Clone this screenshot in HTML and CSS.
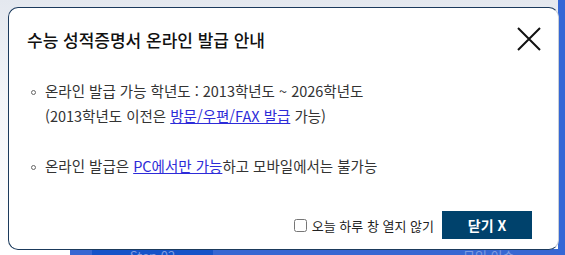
FILE: index.html
```html
<!DOCTYPE html>
<html lang="ko">
<head>
<meta charset="utf-8">
<link rel="stylesheet" href="styles.css">
</head>
<body>
<div class="scene">
  <div class="scene-main">
    <div class="scene-top"></div>
    <div class="scene-bars">
      <div class="bar bar-light w22"></div>
      <div class="bar bar-dark w121">Step 02</div>
      <div class="bar bar-light grow">무인 이수</div>
    </div>
  </div>
  <div class="scene-side"></div>
</div>

<div class="modal">
  <div class="modal-head">
    <h2 class="modal-title">수능 성적증명서 온라인 발급 안내</h2>
    <button class="close-btn" aria-label="닫기">
      <svg width="24" height="24" viewBox="0 0 24 24"><path d="M1 1L23 23M23 1L1 23" stroke="#111" stroke-width="2" fill="none"/></svg>
    </button>
  </div>
  <ul class="modal-list">
    <li><span class="dot"></span><span>온라인 발급 가능 학년도 : 2013학년도 ~ 2026학년도<br>(2013학년도 이전은 <a href="#">방문/우편/FAX 발급</a> 가능)</span></li>
    <li><span class="dot"></span><span>온라인 발급은 <a href="#">PC에서만 가능</a>하고 모바일에서는 불가능</span></li>
  </ul>
  <div class="modal-foot">
    <label class="today"><input type="checkbox" class="chk"><span>오늘 하루 창 열지 않기</span></label>
    <button class="btn-close">닫기 X</button>
  </div>
</div>
</body>
</html>
```
FILE: styles.css
```css
* { box-sizing: border-box; }
html, body { margin: 0; padding: 0; }
body {
  width: 565px;
  height: 255px;
  overflow: hidden;
  font-family: "Noto Sans CJK KR", "Noto Sans", sans-serif;
  position: relative;
}
.scene {
  display: flex;
  width: 565px;
  height: 255px;
}
.scene-main {
  flex: 1;
  display: flex;
  flex-direction: column;
}
.scene-top {
  flex: 1;
  background: linear-gradient(180deg, #e4e8ef 0%, #f3f5f8 40%, #ffffff 100%);
}
.scene-bars {
  height: 6px;
  display: flex;
  padding-left: 70px;
  background: #ffffff;
}
.bar {
  height: 6px;
  font-size: 13px;
  color: #7f9ce0;
  line-height: 14px;
  overflow: hidden;
}
.bar-light { background: #3767d2; }
.bar-dark { background: #1553c8; text-align: center; }
.w22 { width: 22px; }
.w121 { width: 121px; }
.grow { flex: 1; padding-left: 250px; }
.scene-side {
  width: 7px;
  background: #3467d6;
}
.modal {
  position: absolute;
  left: 8px;
  top: 7px;
  width: 551px;
  height: 243px;
  background: #fff;
  border: 1px solid #1b3a5c;
  border-right-color: #c9ced6;
  border-radius: 10px;
  padding: 18px 17px 10px 18px;
  display: flex;
  flex-direction: column;
}
.modal-head {
  display: flex;
  justify-content: space-between;
  align-items: center;
  height: 28px;
}
.modal-title {
  margin: 0;
  font-size: 17px;
  font-weight: 500;
  color: #111;
  line-height: 28px;
}
.close-btn {
  border: 0;
  background: none;
  padding: 0;
  width: 24px;
  height: 24px;
  margin-right: 0;
  display: flex;
  margin-top: -2px;
}
.modal-list {
  margin: 0;
  padding: 24px 0 0 4px;
  list-style: none;
  font-size: 14.5px;
  color: #333;
  line-height: 25px;
  flex: 1;
}
.modal-list li {
  display: flex;
  align-items: flex-start;
  gap: 9px;
  margin-bottom: 25px;
}
.dot {
  width: 5px;
  height: 5px;
  border: 1px solid #666;
  border-radius: 50%;
  margin-top: 12px;
  flex: none;
}
.modal-list a { color: #2d2bd8; text-decoration: underline; }
.modal-foot {
  display: flex;
  justify-content: flex-end;
  align-items: center;
  gap: 8px;
  padding-right: 9px;
}
.today {
  display: flex;
  align-items: center;
  gap: 5px;
  font-size: 13px;
  color: #222;
}
.chk {
  margin: 0;
  width: 13px;
  height: 13px;
}
.btn-close {
  width: 90px;
  height: 28px;
  border: 0;
  background: #00426c;
  color: #fff;
  font-family: inherit;
  font-size: 14px;
  font-weight: 700;
}
```
